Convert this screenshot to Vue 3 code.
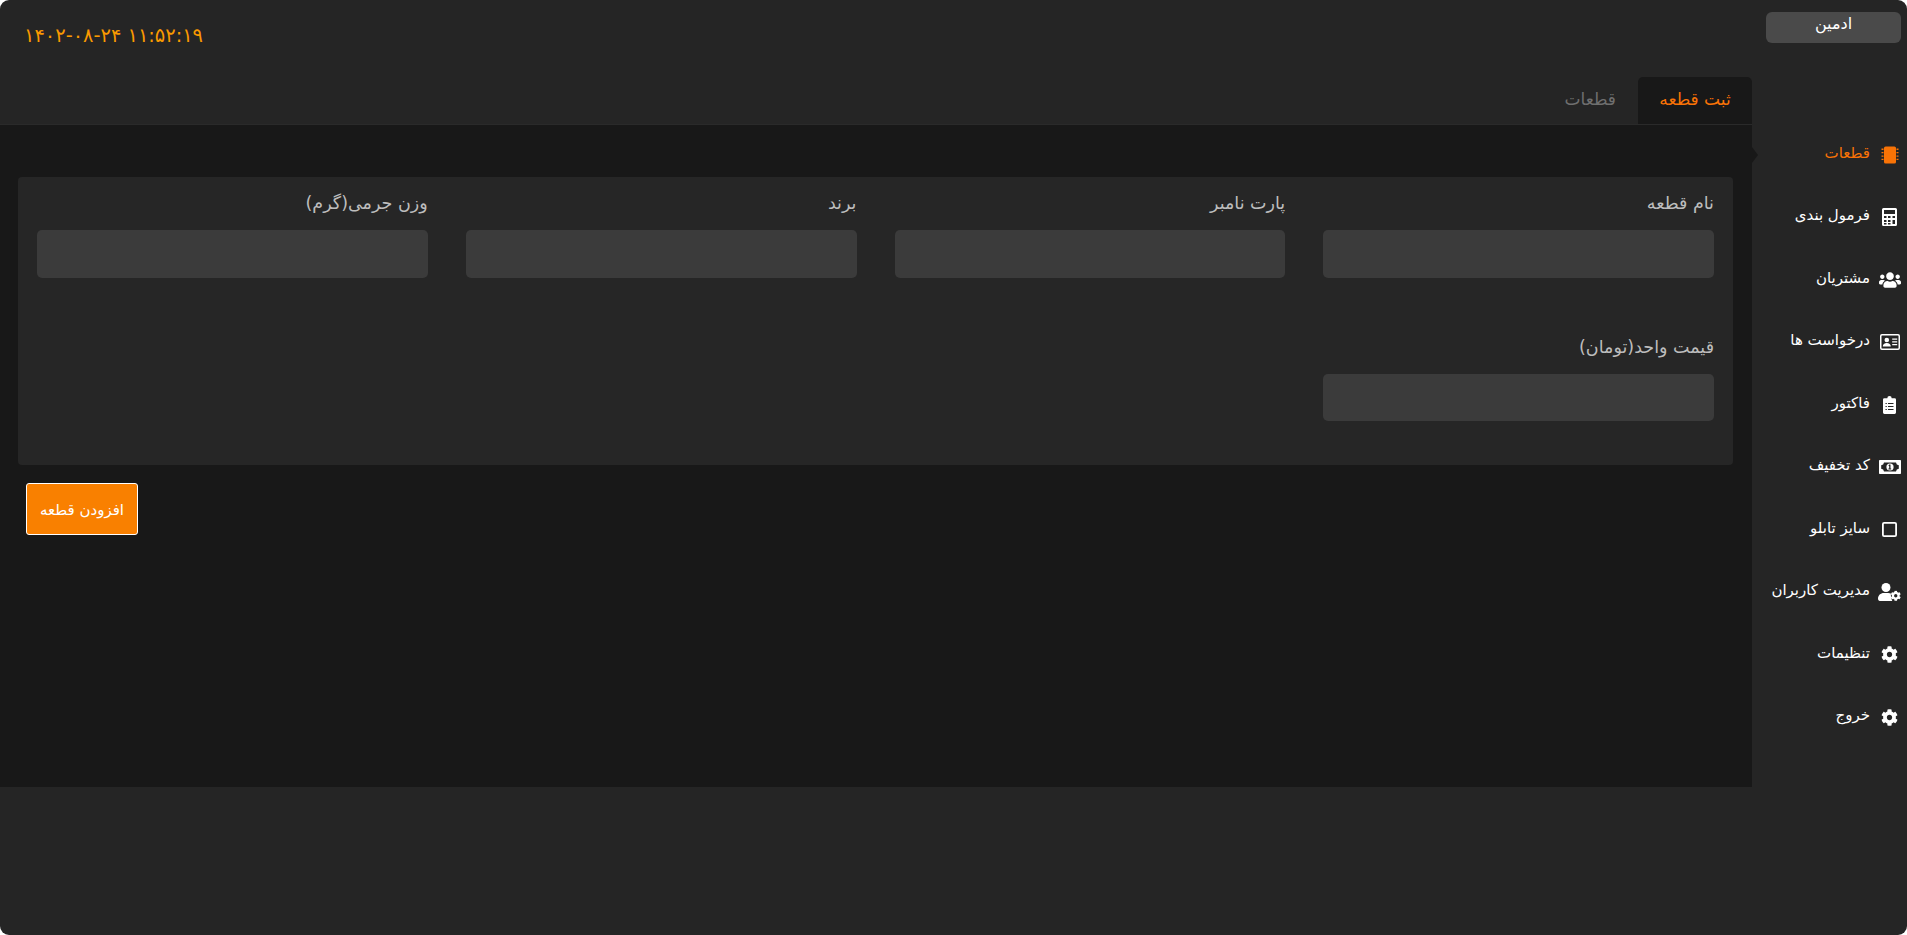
<script setup>
const fields = [
  { label: 'نام قطعه' },
  { label: 'پارت نامبر' },
  { label: 'برند' },
  { label: 'وزن جرمی(گرم)' },
  { label: 'قیمت واحد(تومان)' },
]

const cog = 'M487.4 315.7l-42.6-24.6c4.3-23.2 4.3-47 0-70.2l42.6-24.6c4.9-2.8 7.1-8.6 5.5-14-11.1-35.6-30-67.8-54.7-94.6-3.8-4.1-10-5.1-14.8-2.3L380.8 110c-17.9-15.4-38.5-27.3-60.8-35.1V25.8c0-5.6-3.9-10.5-9.4-11.7-36.7-8.2-74.3-7.8-109.2 0-5.5 1.2-9.4 6.1-9.4 11.7V75c-22.2 7.9-42.8 19.8-60.8 35.1L88.7 85.5c-4.9-2.8-11-1.9-14.8 2.3-24.7 26.7-43.6 58.9-54.7 94.6-1.7 5.4.6 11.2 5.5 14L67.3 221c-4.3 23.2-4.3 47 0 70.2l-42.6 24.6c-4.9 2.8-7.1 8.6-5.5 14 11.1 35.6 30 67.8 54.7 94.6 3.8 4.1 10 5.1 14.8 2.3l42.6-24.6c17.9 15.4 38.5 27.3 60.8 35.1v49.2c0 5.6 3.9 10.5 9.4 11.7 36.7 8.2 74.3 7.8 109.2 0 5.5-1.2 9.4-6.1 9.4-11.7v-49.2c22.2-7.9 42.8-19.8 60.8-35.1l42.6 24.6c4.9 2.8 11 1.9 14.8-2.3 24.7-26.7 43.6-58.9 54.7-94.6 1.5-5.5-.7-11.3-5.6-14.1zM256 336c-44.1 0-80-35.9-80-80s35.9-80 80-80 80 35.9 80 80-35.9 80-80 80z'

const users = 'M96 224c35.3 0 64-28.7 64-64s-28.7-64-64-64-64 28.7-64 64 28.7 64 64 64zm448 0c35.3 0 64-28.7 64-64s-28.7-64-64-64-64 28.7-64 64 28.7 64 64 64zm32 32h-64c-17.6 0-33.5 7.1-45.1 18.6 40.3 22.1 68.9 62 75.1 109.4h66c17.7 0 32-14.3 32-32v-32c0-35.3-28.7-64-64-64zm-256 0c61.9 0 112-50.1 112-112S381.9 32 320 32 208 82.1 208 144s50.1 112 112 112zm76.8 32h-8.3c-20.8 10-43.9 16-68.5 16s-47.6-6-68.5-16h-8.3C179.6 288 128 339.6 128 403.2V432c0 26.5 21.5 48 48 48h288c26.5 0 48-21.5 48-48v-28.8c0-63.6-51.6-115.2-115.2-115.2zm-223.7-13.4C161.5 263.1 145.6 256 128 256H64c-35.3 0-64 28.7-64 64v32c0 17.7 14.3 32 32 32h65.9c6.3-47.4 34.9-87.3 75.2-109.4z'

const items = [
  { label: 'قطعات', icon: 'chip', active: true },
  { label: 'فرمول بندی', icon: 'calc' },
  { label: 'مشتریان', icon: 'users' },
  { label: 'درخواست ها', icon: 'card' },
  { label: 'فاکتور', icon: 'clip' },
  { label: 'کد تخفیف', icon: 'money' },
  { label: 'سایز تابلو', icon: 'square' },
  { label: 'مدیریت کاربران', icon: 'usercog' },
  { label: 'تنظیمات', icon: 'cog' },
  { label: 'خروج', icon: 'cog' },
]
</script>

<template>
  <div class="app">
    <div class="content">
      <header class="topbar">
        <span class="clock">۱۴۰۲-۰۸-۲۴ ۱۱:۵۲:۱۹</span>
      </header>
      <div class="tabs">
        <div class="tab tab-active">ثبت قطعه</div>
        <div class="tab">قطعات</div>
      </div>
      <main class="panel">
        <section class="card">
          <div v-for="f in fields" :key="f.label" class="field">
            <label class="label">{{ f.label }}</label>
            <input class="input" type="text" />
          </div>
        </section>
        <button class="add" type="button">افزودن قطعه</button>
      </main>
    </div>

    <aside class="side">
      <span class="notch"></span>
      <button class="user" type="button">ادمین</button>
      <nav class="nav">
        <a v-for="it in items" :key="it.label" class="item" :class="{ on: it.active }">
          <span class="slot">
            <svg v-if="it.icon === 'chip'" width="18" height="18" viewBox="0 0 18 18" fill="currentColor">
              <rect x="3" y="0.500" width="12" height="17" rx="1.600" />
              <path d="M.5 2.600h2v1.300h-2zM.5 6h2v1.300h-2zM.5 9.400h2v1.300h-2zM.5 12.800h2v1.300h-2zM15.500 2.600h2v1.300h-2zM15.500 6h2v1.300h-2zM15.500 9.400h2v1.300h-2zM15.500 12.800h2v1.300h-2z" />
            </svg>
            <svg v-else-if="it.icon === 'calc'" width="15" height="18" viewBox="0 0 15 18">
              <path fill="#fff" fill-rule="evenodd" d="M1.500 0h12A1.500 1.500 0 0 1 15 1.500v15a1.500 1.500 0 0 1-1.500 1.500h-12A1.500 1.500 0 0 1 0 16.500v-15A1.500 1.500 0 0 1 1.500 0zM2 2v4h11V2zM2 8v2h2.500V8zM6 8v2h2.500V8zM10.500 8v2H13V8zM2 12v2h2.500v-2zM6 12v2h2.500v-2zM10.500 12v4H13v-4zM2 15v1.500h2.500V15zM6 15v1.500h2.500V15z" />
            </svg>
            <svg v-else-if="it.icon === 'users'" width="22" height="18" viewBox="0 0 640 512">
              <path fill="#fff" :d="users" />
            </svg>
            <svg v-else-if="it.icon === 'card'" width="20" height="16" viewBox="0 0 20 16">
              <rect x="0.750" y="0.750" width="18.500" height="14.500" rx="1.200" fill="none" stroke="#fff" stroke-width="1.500" />
              <circle cx="6.800" cy="6" r="2.300" fill="#fff" />
              <path fill="#fff" d="M2.800 12.500c0-2.200 1.700-3.600 4-3.600s4 1.400 4 3.600zM12.200 4.500h5v1.300h-5zM12.200 7.200h5v1.300h-5zM12.200 9.900h5v1.300h-5z" />
            </svg>
            <svg v-else-if="it.icon === 'clip'" width="13" height="18" viewBox="0 0 13 18">
              <path fill="#fff" fill-rule="evenodd" d="M4.300 2.200a2.200 2.200 0 0 1 4.400 0H11.600A1.400 1.400 0 0 1 13 3.600V16.600A1.400 1.400 0 0 1 11.600 18H1.400A1.400 1.400 0 0 1 0 16.600V3.600A1.400 1.400 0 0 1 1.400 2.200zM2.500 7v1.100h1.300V7zM5 7v1.100h5.500V7zM2.500 10v1.100h1.300V10zM5 10v1.100h5.500V10zM2.500 13v1.100h1.300V13zM5 13v1.100h5.500V13z" />
            </svg>
            <svg v-else-if="it.icon === 'money'" width="22" height="14" viewBox="0 0 22 14">
              <path fill="#fff" fill-rule="evenodd" d="M.8 0h20.400a.8.8 0 0 1 .8.8v12.400a.8.8 0 0 1-.8.8H.8a.8.800 0 0 1-.8-.8V.8A.8.800 0 0 1 .8 0zM5 2.500A3 3 0 0 1 2.200 5.200v3.600A3 3 0 0 1 5 11.500h12a3 3 0 0 1 2.800-2.700V5.200A3 3 0 0 1 17 2.500z" />
              <circle cx="11" cy="7" r="3.600" fill="#fff" />
              <path fill="#252525" d="M10.200 4.600h1.300v4h.7v1h-2.800v-1h.8V6h-.8z" />
            </svg>
            <svg v-else-if="it.icon === 'square'" width="15" height="15" viewBox="0 0 15 15">
              <rect x="0.900" y="0.900" width="13.200" height="13.200" rx="1.200" fill="none" stroke="#fff" stroke-width="1.800" />
            </svg>
            <svg v-else-if="it.icon === 'usercog'" width="23" height="18" viewBox="0 0 23 18">
              <circle cx="8" cy="4.500" r="4.500" fill="#fff" />
              <path fill="#fff" d="M0 15.800C0 12.300 2.600 10 5.800 10h4.400c1 0 1.900.2 2.700.6-.2 1.800.2 5 1.400 7.400H1.800C.8 18 0 17 0 15.800z" />
              <svg x="12.500" y="7.500" width="10.500" height="10.500" viewBox="0 0 512 512">
                <path fill="#fff" :d="cog" />
              </svg>
            </svg>
            <svg v-else width="17" height="17" viewBox="0 0 512 512">
              <path fill="#fff" :d="cog" />
            </svg>
          </span>
          <span class="text">{{ it.label }}</span>
        </a>
      </nav>
    </aside>
  </div>
</template>

<style>
html,
body {
  margin: 0;
  background: #fff;
}
</style>

<style scoped>
.app {
  display: flex;
  height: 935px;
  overflow: hidden;
  border-radius: 9px;
  background: #252525;
  font-family: "DejaVu Sans", sans-serif;
}
.content {
  width: 1752px;
  flex: none;
  display: flex;
  flex-direction: column;
}
.topbar {
  height: 77px;
  box-sizing: border-box;
  padding: 23px 0 0 24px;
}
.clock {
  display: block;
  color: #f99a00;
  font-size: 19.400px;
  line-height: 26px;
  direction: ltr;
}
.tabs {
  display: flex;
  direction: rtl;
  height: 47px;
  border-bottom: 1px solid #2a2a2a;
}
.tab {
  padding: 0 22px;
  height: 47px;
  line-height: 44px;
  font-size: 17px;
  color: #6f6f6f;
  border-radius: 5px 5px 0 0;
}
.tab-active {
  width: 114px;
  box-sizing: border-box;
  padding: 0;
  text-align: center;
  background: #181818;
  color: #f97306;
}
.panel {
  height: 662px;
  box-sizing: border-box;
  background: #181818;
  padding: 52px 19px 0 18px;
  direction: rtl;
  display: flex;
  flex-direction: column;
}
.card {
  display: grid;
  grid-template-columns: repeat(4, 1fr);
  column-gap: 38px;
  row-gap: 56px;
  height: 288px;
  box-sizing: border-box;
  padding: 13px 19px 0;
  border-radius: 4px;
  background: #262626;
  align-content: start;
}
.field {
  display: flex;
  flex-direction: column;
  min-width: 0;
}
.label {
  height: 27px;
  line-height: 27px;
  margin-bottom: 13px;
  font-size: 17.500px;
  color: #bdbdbd;
  white-space: nowrap;
}
.input {
  display: block;
  width: 100%;
  height: 47.500px;
  box-sizing: border-box;
  border: 0;
  outline: 0;
  border-radius: 5px;
  background: #3b3b3b;
}
.add {
  align-self: flex-end;
  width: 112px;
  height: 52px;
  margin: 18px 0 0 8px;
  border: 1px solid #fff;
  border-radius: 3px;
  background: #f98000;
  color: #fff;
  font-family: inherit;
  font-size: 15px;
  line-height: 20px;
  padding: 2px 0 0;
  cursor: pointer;
}
.side {
  flex: 1;
  position: relative;
  display: flex;
  flex-direction: column;
}
.notch {
  position: absolute;
  left: 0;
  top: 147px;
  width: 0;
  height: 0;
  border-top: 8px solid transparent;
  border-bottom: 8px solid transparent;
  border-left: 6px solid #181818;
}
.user {
  width: 135px;
  height: 31px;
  margin: 12px 0 0 14px;
  border: 0;
  border-radius: 6px;
  background: #4a4a4a;
  color: #fff;
  font-family: inherit;
  font-size: 16px;
  line-height: 22px;
  padding: 0 0 7px;
}
.nav {
  margin-top: 80.250px;
  display: flex;
  flex-direction: column;
  direction: rtl;
}
.item {
  display: flex;
  align-items: center;
  height: 62.500px;
  padding-right: 3px;
  color: #fff;
  font-size: 15px;
}
.item.on {
  color: #f97306;
}
.slot {
  flex: none;
  width: 29px;
  margin-left: 5px;
  display: flex;
  align-items: center;
  justify-content: center;
}
.slot svg {
  display: block;
}
.text {
  white-space: nowrap;
  line-height: 20px;
  margin-top: -4px;
}
</style>
